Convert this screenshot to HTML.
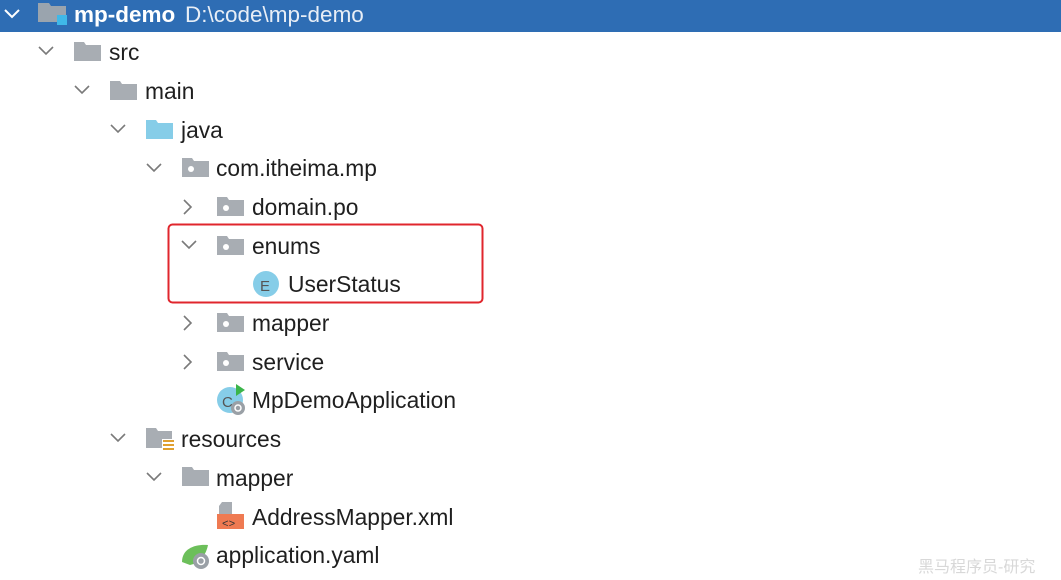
<!DOCTYPE html>
<html><head><style>
body{margin:0;width:1061px;height:572px;background:#fff;overflow:hidden;position:relative;font-family:"Liberation Sans","Noto Sans CJK SC",sans-serif;font-size:22.8px;color:#1f1f1f}
.hdr{position:absolute;left:0;top:0;width:1061px;height:32px;background:#2e6db4}
.t{position:absolute;white-space:nowrap;line-height:24px}
</style></head><body>
<div class="hdr"></div>
<svg width="1061" height="572" style="position:absolute;left:0;top:0">
<defs>
<g id="down"><path d="M-7,-4 L0,3 L7,-4" fill="none" stroke="#7a7a7a" stroke-width="1.6"/></g>
<g id="right"><path d="M-3,-7 L4,0 L-3,7" fill="none" stroke="#7a7a7a" stroke-width="1.6"/></g>
<g id="fd"><path d="M0,0 H10 L12,3 H27 V19 H0 Z" fill="#a8adb3"/></g>
<g id="pk"><path d="M0,0 H10 L12,3 H27 V19 H0 Z" fill="#a8adb3"/><circle cx="9" cy="11" r="3" fill="#fff"/></g>
</defs>
<path d="M5,10 L12,17 L19,10" fill="none" stroke="#fff" stroke-width="2"/>
<path d="M38,3 H49 L51,6 H66 V22 H38 Z" fill="#9aa4ae"/><rect x="57" y="15" width="10" height="10" fill="#3fb8e8"/>
<text x="74" y="22" fill="#fff" font-weight="bold" font-size="22.5" font-family="Liberation Sans">mp-demo</text>
<text x="185" y="22" fill="#e8eef6" font-size="22.5" font-family="Liberation Sans">D:\code\mp-demo</text>

<use href="#down" x="46" y="51"/><use href="#fd" x="74" y="42"/>
<use href="#down" x="82" y="90"/><use href="#fd" x="110" y="81"/>
<use href="#down" x="118" y="129"/><path d="M146,120 H156 L158,123 H173 V139 H146 Z" fill="#86cde8"/>
<use href="#down" x="154" y="168"/><use href="#pk" x="182" y="158"/>
<use href="#right" x="187" y="207"/><use href="#pk" x="217" y="197"/>
<use href="#down" x="189" y="245"/><use href="#pk" x="217" y="236"/>
<circle cx="266" cy="284" r="13" fill="#86cde8"/><text x="260" y="291" fill="#555" font-size="15" font-family="Liberation Sans">E</text>
<use href="#right" x="187" y="323"/><use href="#pk" x="217" y="313"/>
<use href="#right" x="187" y="362"/><use href="#pk" x="217" y="352"/>
<circle cx="230" cy="400" r="13" fill="#86cde8"/><text x="222" y="407" fill="#555" font-size="15" font-family="Liberation Sans">C</text>
<path d="M236,384 L245,390 L236,396 Z" fill="#3bb54a"/><circle cx="238" cy="408" r="7" fill="#9aa0a6"/><circle cx="238" cy="408" r="3" fill="none" stroke="#fff" stroke-width="1.5"/>
<use href="#down" x="118" y="438"/><path d="M146,428 H156 L158,431 H172 V448 H146 Z" fill="#a8adb3"/><rect x="162" y="439" width="13" height="13" fill="#fff"/><path d="M163,441h11M163,445h11M163,449h11" stroke="#e0a030" stroke-width="2"/>
<use href="#down" x="154" y="477"/><use href="#fd" x="182" y="467"/>
<path d="M222,502 H232 V515 H219 V506 Z" fill="#a8adb3"/><rect x="217" y="514" width="27" height="15" fill="#ef7a52"/><text x="222" y="527" fill="#333" font-size="11" font-family="Liberation Mono">&lt;&gt;</text>
<path d="M182,562 C182,548 196,544 208,545 C206,555 200,563 190,565 Z" fill="#6cbf5a"/><circle cx="201" cy="561" r="8" fill="#9aa0a6"/><circle cx="201" cy="561" r="3.5" fill="none" stroke="#fff" stroke-width="1.5"/>
<rect x="168.5" y="224.5" width="314" height="78" rx="4" fill="none" stroke="#e0262d" stroke-width="2"/>
</svg>
<div class="t" style="left:109px;top:40px">src</div>
<div class="t" style="left:145px;top:79px">main</div>
<div class="t" style="left:181px;top:118px">java</div>
<div class="t" style="left:216px;top:156px">com.itheima.mp</div>
<div class="t" style="left:252px;top:195px">domain.po</div>
<div class="t" style="left:252px;top:234px">enums</div>
<div class="t" style="left:288px;top:272px">UserStatus</div>
<div class="t" style="left:252px;top:311px">mapper</div>
<div class="t" style="left:252px;top:350px">service</div>
<div class="t" style="left:252px;top:388px">MpDemoApplication</div>
<div class="t" style="left:181px;top:427px">resources</div>
<div class="t" style="left:216px;top:466px">mapper</div>
<div class="t" style="left:252px;top:505px">AddressMapper.xml</div>
<div class="t" style="left:216px;top:543px">application.yaml</div>
<div class="t" style="left:918px;top:556px;color:#d8d8d8;font-size:16px">黑马程序员-研究</div>
</body></html>
